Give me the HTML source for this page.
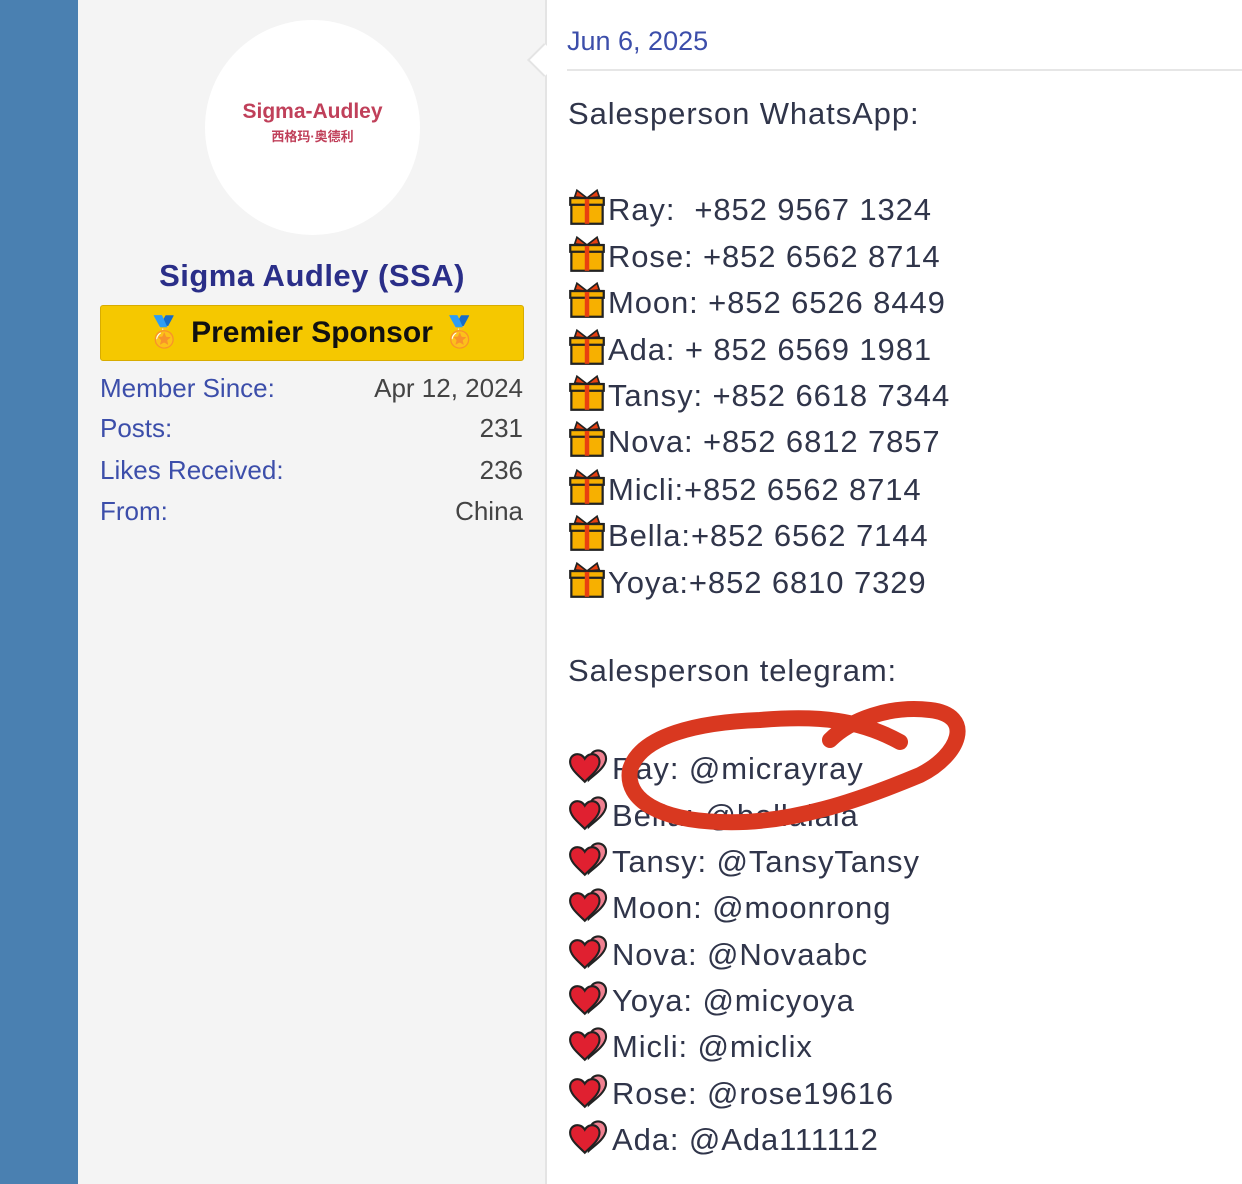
<!DOCTYPE html>
<html><head><meta charset="utf-8"><style>
body{margin:0;width:1242px;height:1184px;position:relative;overflow:hidden;background:#fff;font-family:"Liberation Sans","Noto Sans CJK SC",sans-serif;}
.blue{position:absolute;left:0;top:0;width:78px;height:1184px;background:#4a80b1;}
.side{position:absolute;left:78px;top:0;width:467px;height:1184px;background:#f4f4f4;border-right:2px solid #e4e4e4;}
.arrow{position:absolute;left:532px;top:48px;width:22px;height:22px;background:#fff;transform:rotate(45deg);border-left:2px solid #e4e4e4;border-bottom:2px solid #e4e4e4;}
.av{position:absolute;left:205px;top:20px;width:215px;height:215px;border-radius:50%;background:#fff;text-align:center;}
.av .a{margin-top:80px;font-weight:bold;color:#c0405a;font-size:21px;}
.av .b{font-weight:bold;color:#c0405a;font-size:13px;margin-top:2px;}
.name{position:absolute;left:100px;width:424px;top:258px;text-align:center;font-weight:bold;font-size:31px;letter-spacing:0.5px;color:#2a2e88;}
.badge{position:absolute;left:100px;top:305px;width:422px;height:54px;background:#f5c800;border:1px solid #d8ac00;border-radius:3px;text-align:center;font-weight:bold;font-size:30px;line-height:54px;color:#111;}
.row{position:absolute;left:100px;width:423px;font-size:26px;color:#3c4eaa;}
.row span{float:right;color:#444;}
.t{position:absolute;left:568px;font-size:31px;color:#30354a;white-space:nowrap;letter-spacing:0.9px;}
.date{position:absolute;left:567px;top:26px;font-size:27px;color:#3c4eaa;}
.hr{position:absolute;left:567px;top:69px;width:675px;height:2px;background:#e6e6e6;}
.g{display:inline-block;width:38px;height:38px;vertical-align:-6px;margin-right:2px;}
</style></head><body>
<div class="blue"></div>
<div class="side"></div>
<div class="arrow"></div>
<div class="av"><div class="a">Sigma-Audley</div><div class="b">西格玛·奥德利</div></div>
<div class="name">Sigma Audley (SSA)</div>
<div class="badge">🏅 Premier Sponsor 🏅</div>
<div class="row" style="top:373px">Member Since:<span>Apr 12, 2024</span></div>
<div class="row" style="top:413px">Posts:<span>231</span></div>
<div class="row" style="top:455px">Likes Received:<span>236</span></div>
<div class="row" style="top:496px">From:<span>China</span></div>
<div class="date">Jun 6, 2025</div>
<div class="hr"></div>
<div class="t" style="top:96px">Salesperson WhatsApp:</div>
<svg width="0" height="0" style="position:absolute"><defs>
<symbol id="gift" viewBox="0 0 34 34"><rect x="3" y="9" width="28" height="23" fill="#f7b000" stroke="#222" stroke-width="2"/><rect x="2" y="9" width="30" height="6" fill="#f7b000" stroke="#222" stroke-width="2"/><rect x="15" y="9" width="4" height="23" fill="#e84010"/><path d="M17 9 L8 2 L6 8 Z M17 9 L26 2 L28 8 Z" fill="#e84010" stroke="#222" stroke-width="1.5"/></symbol>
<symbol id="heart" viewBox="0 0 40 34"><path d="M22 6 C26 -1 38 2 36 12 C34 20 24 26 20 30 Z" fill="#f08090" stroke="#222" stroke-width="2"/><path d="M16 32 C10 26 2 20 2 13 C2 5 12 3 16 10 C20 3 30 5 30 13 C30 20 22 26 16 32 Z" fill="#e02030" stroke="#222" stroke-width="2"/></symbol>
</defs></svg>
<div class="t" style="top:188px"><svg class="g"><use href="#gift"/></svg>Ray:&nbsp; +852 9567 1324</div>
<div class="t" style="top:235px"><svg class="g"><use href="#gift"/></svg>Rose: +852 6562 8714</div>
<div class="t" style="top:281px"><svg class="g"><use href="#gift"/></svg>Moon: +852 6526 8449</div>
<div class="t" style="top:328px"><svg class="g"><use href="#gift"/></svg>Ada: + 852 6569 1981</div>
<div class="t" style="top:374px"><svg class="g"><use href="#gift"/></svg>Tansy: +852 6618 7344</div>
<div class="t" style="top:420px"><svg class="g"><use href="#gift"/></svg>Nova: +852 6812 7857</div>
<div class="t" style="top:468px"><svg class="g"><use href="#gift"/></svg>Micli:+852 6562 8714</div>
<div class="t" style="top:514px"><svg class="g"><use href="#gift"/></svg>Bella:+852 6562 7144</div>
<div class="t" style="top:561px"><svg class="g"><use href="#gift"/></svg>Yoya:+852 6810 7329</div>
<div class="t" style="top:653px">Salesperson telegram:</div>
<div class="t" style="top:747px"><svg class="g" style="width:42px"><use href="#heart"/></svg>Ray: @micrayray</div>
<div class="t" style="top:794px"><svg class="g" style="width:42px"><use href="#heart"/></svg>Bella: @bellalala</div>
<div class="t" style="top:840px"><svg class="g" style="width:42px"><use href="#heart"/></svg>Tansy: @TansyTansy</div>
<div class="t" style="top:886px"><svg class="g" style="width:42px"><use href="#heart"/></svg>Moon: @moonrong</div>
<div class="t" style="top:933px"><svg class="g" style="width:42px"><use href="#heart"/></svg>Nova: @Novaabc</div>
<div class="t" style="top:979px"><svg class="g" style="width:42px"><use href="#heart"/></svg>Yoya: @micyoya</div>
<div class="t" style="top:1025px"><svg class="g" style="width:42px"><use href="#heart"/></svg>Micli: @miclix</div>
<div class="t" style="top:1072px"><svg class="g" style="width:42px"><use href="#heart"/></svg>Rose: @rose19616</div>
<div class="t" style="top:1118px"><svg class="g" style="width:42px"><use href="#heart"/></svg>Ada: @Ada111112</div>
<svg style="position:absolute;left:0;top:0" width="1242" height="1184">
<path d="M900 742 C860 720 820 715 760 720 C700 722 640 735 630 770 C625 800 660 820 720 822 C790 825 860 800 920 775 C960 755 975 715 930 710 C890 705 850 720 830 740" fill="none" stroke="#d93820" stroke-width="16" stroke-linecap="round"/>
</svg>
</body></html>
